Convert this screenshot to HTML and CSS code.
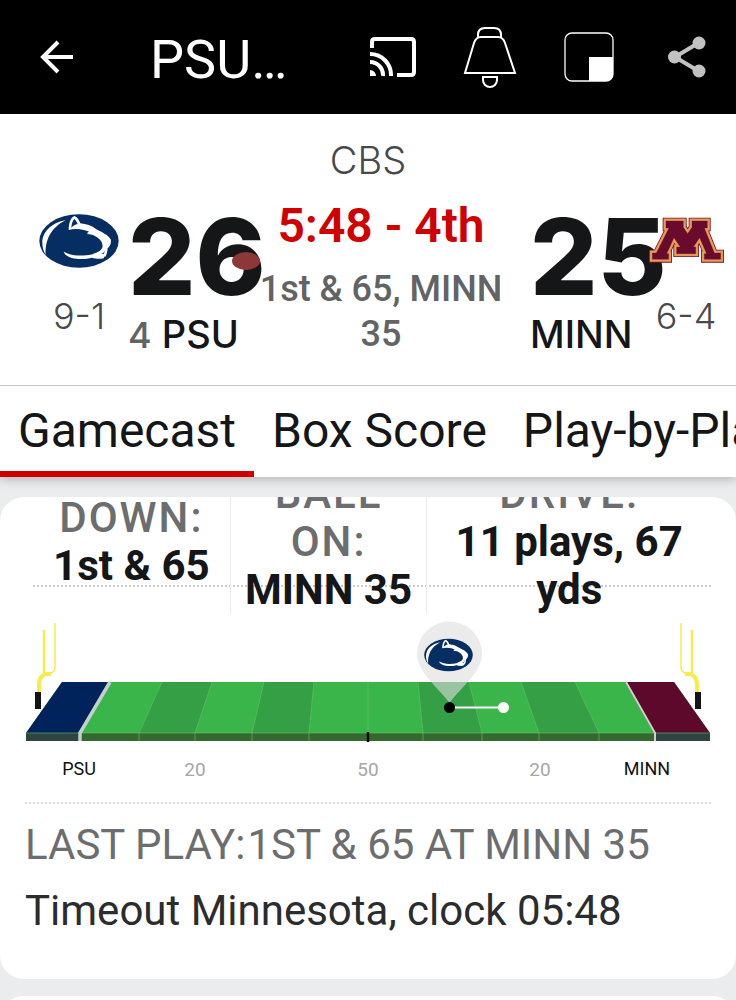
FILE: index.html
```html
<!DOCTYPE html>
<html lang="en">
<head>
    <meta charset="UTF-8">
    <meta name="viewport" content="width=device-width, initial-scale=1.0">
    <title>PSU vs MINN - Gamecast</title>
    <link rel="stylesheet" href="styles.css">
</head>
<body>
    <!-- shared team logo -->
    <svg class="defs" width="0" height="0" aria-hidden="true">
        <symbol id="psu-logo" viewBox="27 32 240 162">
            <ellipse cx="147" cy="113" rx="119" ry="80" fill="#062e63"/>
            <path d="M107 51C66 57 36 86 37 119c0 14 4 26 10 36-2-43 14-81 60-104z" fill="#fff"/>
            <path d="M116 80c0-20 6-38 17-42 9 3 14 12 18 22 18 2 34 6 48 18 19 9 36 18 43 30 3 11-2 20-9 27-1 12-3 19-7 25l-9-1c7-11 12-23 11-34-3-13-22-25-45-37-20-10-45-14-67-8z" fill="#fff"/>
            <path d="M124 73c1-12 4-21 9-26 5 5 8 10 10 15-7 2-13 5-19 11z" fill="#062e63"/>
            <path d="M171 86l18-1 5 6c19 9 34 19 36 34 1 14-7 24-18 28l-24-2c15-3 25-9 29-18 4-15-8-29-28-38-7-2-13-3-20-3l7-3z" fill="#fff"/>
            <path d="M101 145c27 14 53 14 91 7h34l-5 13c-13 3-25 1-35-2-26 8-78 6-85-18z" fill="#fff"/>
        </symbol>
    </svg>

    <header class="topbar">
        <button class="icon-btn" aria-label="Back">
            <svg width="34" height="34" viewBox="0 0 34 34" fill="none" stroke="#fff" stroke-width="4"><path d="M33 17H3M18 2L3 17l15 15"/></svg>
        </button>
        <h1>PSU…</h1>
        <div class="actions">
            <button class="icon-btn" aria-label="Cast">
                <svg width="46" height="40" viewBox="0 0 46 40" fill="none" stroke="#fff" stroke-width="4">
                    <path d="M2 11V5q0-3 3-3h36q3 0 3 3v30q0 3-3 3H27"/>
                    <path d="M0 17a21 21 0 0 1 21 22M0 25a13 13 0 0 1 13 14"/>
                    <path d="M0 33a6 6 0 0 1 6 6H0z" fill="#fff" stroke="none"/>
                </svg>
            </button>
            <button class="icon-btn" aria-label="Alerts">
                <svg width="54" height="62" viewBox="0 0 54 62" fill="none" stroke="#fff" stroke-width="2">
                    <path d="M15 11V9q0-7 7-7h9q7 0 7 7v2"/>
                    <path d="M18 11h17q5 0 7 6l10 30H2l9-30q2-6 7-6z"/>
                    <path d="M20 51h14v3a7 7 0 0 1-14 0z"/>
                </svg>
            </button>
            <button class="icon-btn" aria-label="Picture in picture">
                <svg width="50" height="50" viewBox="0 0 50 50">
                    <rect x="1" y="1" width="48" height="48" rx="7" fill="none" stroke="#fff" stroke-width="1.3"/>
                    <path d="M25 25h24v17q0 7-7 7H25z" fill="#fff"/>
                </svg>
            </button>
            <button class="icon-btn share" aria-label="Share">
                <svg width="38" height="42" viewBox="0 0 38 42" fill="#c2c2c2">
                    <path d="M32 6L7 21l25 15" fill="none" stroke="#c2c2c2" stroke-width="4"/>
                    <circle cx="6.500" cy="21" r="6.500"/><circle cx="31" cy="7" r="6.500"/><circle cx="31" cy="35" r="6.500"/>
                </svg>
            </button>
        </div>
    </header>

    <section class="scoreboard">
        <p class="network">CBS</p>
        <div class="matchup">
            <div class="team away">
                <svg width="80" height="54"><use href="#psu-logo"/></svg>
                <span class="record">9-1</span>
            </div>
            <div class="score">
                <strong>26<i class="possession"></i></strong>
                <span class="name"><small>4</small> PSU</span>
            </div>
            <div class="status">
                <p class="clock">5:48 - 4th</p>
                <p class="situation">1st &amp; 65, MINN 35</p>
            </div>
            <div class="score home-score">
                <strong>25</strong>
                <span class="name">MINN</span>
            </div>
            <div class="team">
                <svg width="75" height="54" viewBox="25 32 225 162">
                    <defs>
                        <path id="minn-m" d="M76 53H128V72L141 91L154 72V53H200V74H191L221 149H240V168H191V151H198L177 103L158 131H165V151H108V131H119L100 103L78 151H84V168H35V149H47L85 74H76Z"/>
                    </defs>
                    <use href="#minn-m" fill="none" stroke="#6f1230" stroke-width="20"/>
                    <use href="#minn-m" fill="none" stroke="#e99b56" stroke-width="15"/>
                    <use href="#minn-m" fill="#6a0b2d" stroke="#6a0b2d" stroke-width="1"/>
                </svg>
                <span class="record">6-4</span>
            </div>
        </div>
    </section>

    <nav class="tabs">
        <a class="active" href="#gamecast">Gamecast</a>
        <a href="#boxscore">Box Score</a>
        <a href="#plays">Play-by-Play</a>
    </nav>

    <main>
        <section class="card" id="gamecast">
            <dl class="drive-info">
                <div><dt>DOWN:</dt><dd>1st &amp; 65</dd></div>
                <div><dt>BALL ON:</dt><dd>MINN 35</dd></div>
                <div><dt>DRIVE:</dt><dd>11 plays, 67 yds</dd></div>
            </dl>

            <svg class="field" viewBox="0 613 736 171" role="img" aria-label="Ball on MINN 35">
                <!-- goal posts -->
                <g fill="none" stroke="#f5ec4e">
                    <path d="M55 622v44q0 6-7 7" stroke-width="1.500"/>
                    <path d="M44 629v46" stroke-width="2.500"/>
                    <path d="M51 673h-4q-8 1-8 11v8" stroke-width="4"/>
                    <path d="M681 622v44q0 6 7 7" stroke-width="1.500"/>
                    <path d="M692 629v46" stroke-width="2.500"/>
                    <path d="M685 673h4q8 1 8 11v8" stroke-width="4"/>
                </g>
                <path d="M35 691h6v17h-6zM695 691h6v17h-6z" fill="#141414"/>
                <!-- turf -->
                <path d="M62 681H674L710 732H26z" fill="#3ab54a"/>
                <path d="M162 681h50l-17 51h-56zM264 681h50l-5 51h-57zM418 681h51l13 51h-59zM521 681h54l24 51h-60z" fill="#359f46"/>
                <path d="M62 681h47l-31 51H26z" fill="#00235b"/>
                <path d="M625 681h49l36 51h-56z" fill="#5d092c"/>
                <path d="M26 732h684v8H26z" fill="#33692f"/>
                <path d="M26 732h53v8H26zM655 732h55v8h-55z" fill="#2d4443"/>
                <path d="M26 732h684M162 681l-23 51v8M212 681l-17 51v8M264 681l-12 51v8M314 681l-5 51v8M368 681v51M418 681l5 51v8M469 681l13 51v8M521 681l18 51v8M575 681l24 51v8" fill="none" stroke="#65c264" stroke-width=".6"/>
                <path d="M110 681l-30 51v8" fill="none" stroke="#c3cfcc" stroke-width="3.500"/>
                <path d="M626 681l29 51v8" fill="none" stroke="#d5ceca" stroke-width="2"/>
                <path d="M368 731v10" stroke="#000" stroke-width="2.500"/>
                <!-- ball marker -->
                <path d="M449.500 702C438 686 417 671 417 653a32.500 32.500 0 0 1 65 0c0 18-21 33-32.500 49z" fill="#dedede" opacity=".6"/>
                <use href="#psu-logo" x="424" y="637" width="49" height="34"/>
                <path d="M450 706.500h53" stroke="#fff" stroke-width="2"/>
                <circle cx="449.500" cy="706.500" r="5.500"/>
                <circle cx="503.500" cy="706.500" r="5.500" fill="#fff"/>
                <!-- yard labels -->
                <g class="yards">
                    <text class="side" x="79" y="774">PSU</text>
                    <text x="195" y="775">20</text>
                    <text x="368" y="775">50</text>
                    <text x="540" y="775">20</text>
                    <text class="side" x="647" y="774">MINN</text>
                </g>
            </svg>

            <div class="last-play">
                <h2><span>LAST PLAY:</span><span>1ST &amp; 65 AT MINN 35</span></h2>
                <p>Timeout Minnesota, clock 05:48</p>
            </div>
        </section>
        <section class="card next-card"></section>
    </main>
</body>
</html>
```
FILE: styles.css
```css
* {
    box-sizing: border-box;
}

body {
    margin: 0;
    height: 100vh;
    display: flex;
    flex-direction: column;
    overflow: hidden;
    background: #ebecee;
    color: #141617;
    font-family: Roboto, "Liberation Sans", sans-serif;
}

h1, h2, p, dl, dd {
    margin: 0;
}

svg {
    display: block;
}

.defs {
    position: absolute;
}

/* top bar */
.topbar {
    flex: none;
    height: 114px;
    padding: 0 30px 0 40px;
    display: flex;
    align-items: center;
    background: #000;
    color: #fff;
}

.topbar h1 {
    margin-left: 76px;
    padding-top: 6px;
    font-size: 54px;
    font-weight: 400;
    line-height: 64px;
}

.icon-btn {
    padding: 0;
    border: none;
    background: none;
    cursor: pointer;
}

.actions {
    margin-left: auto;
    display: flex;
    align-items: center;
    gap: 47px;
}

.share {
    margin-left: 7px;
}

/* scoreboard */
.scoreboard {
    flex: none;
    padding: 24px 0 27px;
    background: #fff;
    border-bottom: 1px solid #c4c4c4;
    font-family: Inter, Roboto, sans-serif;
}

.network {
    color: #48494a;
    font-size: 38px;
    font-weight: 300;
    line-height: 44px;
    text-align: center;
}

.matchup {
    display: grid;
    grid-template-columns: 128px 128px 1fr 130px 100px;
    align-items: start;
    padding-top: 12px;
}

.team {
    display: flex;
    flex-direction: column;
    align-items: center;
    gap: 26px;
    padding-top: 20px;
    position: relative;
}

.away {
    padding-left: 30px;
}

.record {
    color: #48494a;
    font-size: 36px;
    font-weight: 300;
    line-height: 44px;
}

.score {
    display: flex;
    flex-direction: column;
    padding-top: 9px;
    white-space: nowrap;
}

.home-score {
    padding-left: 24px;
}

.score strong {
    position: relative;
    font-size: 106px;
    font-weight: 800;
    line-height: 108px;
}

.possession {
    position: absolute;
    left: 104px;
    top: 49px;
    width: 28px;
    height: 18px;
    border-radius: 50%;
    background: #8e3737;
}

.name {
    font-size: 38px;
    font-weight: 500;
    line-height: 46px;
}

.name small {
    color: #626364;
    font-size: 36px;
}

.status {
    padding-top: 4px;
    font-family: Roboto, sans-serif;
    text-align: center;
}

.clock {
    color: #d00000;
    font-size: 48px;
    font-weight: 600;
    line-height: 56px;
}

.situation {
    padding-top: 13px;
    color: #626364;
    font-size: 36px;
    font-weight: 500;
    line-height: 45px;
}

/* tabs */
.tabs {
    flex: none;
    display: flex;
    position: relative;
    overflow: visible;
    background: #fff;
    box-shadow: 0 2px 10px rgba(0, 0, 0, 0.25);
    clip-path: inset(0 0 -20px 0);
    white-space: nowrap;
}

.tabs a {
    height: 91px;
    padding: 0 18px;
    border-bottom: 6px solid transparent;
    color: #141617;
    font-size: 48px;
    line-height: 90px;
    text-decoration: none;
}

.tabs .active {
    border-bottom-color: #d00000;
}

/* cards */
main {
    flex: 1;
    min-height: 0;
    overflow: hidden;
    display: flex;
    flex-direction: column;
    gap: 17px;
    padding-top: 20px;
}

.card {
    flex: none;
    overflow: hidden;
    background: #fff;
    border-radius: 24px;
}

.next-card {
    height: 200px;
}

.drive-info {
    position: relative;
    display: grid;
    grid-template-columns: 198fr 197fr 284fr;
    /* scrolled a little under the tabs */
    margin: -27px 25px 0 33px;
    font-size: 42px;
    line-height: 48px;
    text-align: center;
}

.drive-info::before {
    content: "";
    position: absolute;
    left: 0;
    right: 0;
    top: 115px;
    border-top: 2px dotted #ccc;
}

.drive-info div {
    position: relative;
    min-height: 144px;
    padding: 0 10px;
    display: flex;
    flex-direction: column;
    justify-content: center;
    border-right: 1px solid #e9eaeb;
}

.drive-info div:last-child {
    padding: 0 24px;
    border-right: none;
}

.drive-info dt {
    color: #6c6d6f;
    font-weight: 500;
    letter-spacing: 2px;
}

.drive-info dd {
    font-weight: 700;
}

.field {
    width: 100%;
}

.yards text {
    fill: #a5a6a7;
    font-size: 19px;
    text-anchor: middle;
}

.yards .side {
    fill: #111;
    font-size: 18px;
}

.last-play {
    margin: 17px 25px 0;
    padding: 16px 0 43px;
    border-top: 2px dotted #ddd;
    font-size: 42px;
    line-height: 50px;
}

.last-play h2 {
    display: flex;
    gap: 2px;
    color: #6c6d6f;
    font-size: 42px;
    font-weight: 400;
}

.last-play p {
    padding-top: 16px;
    color: #2b2c2d;
}
```
